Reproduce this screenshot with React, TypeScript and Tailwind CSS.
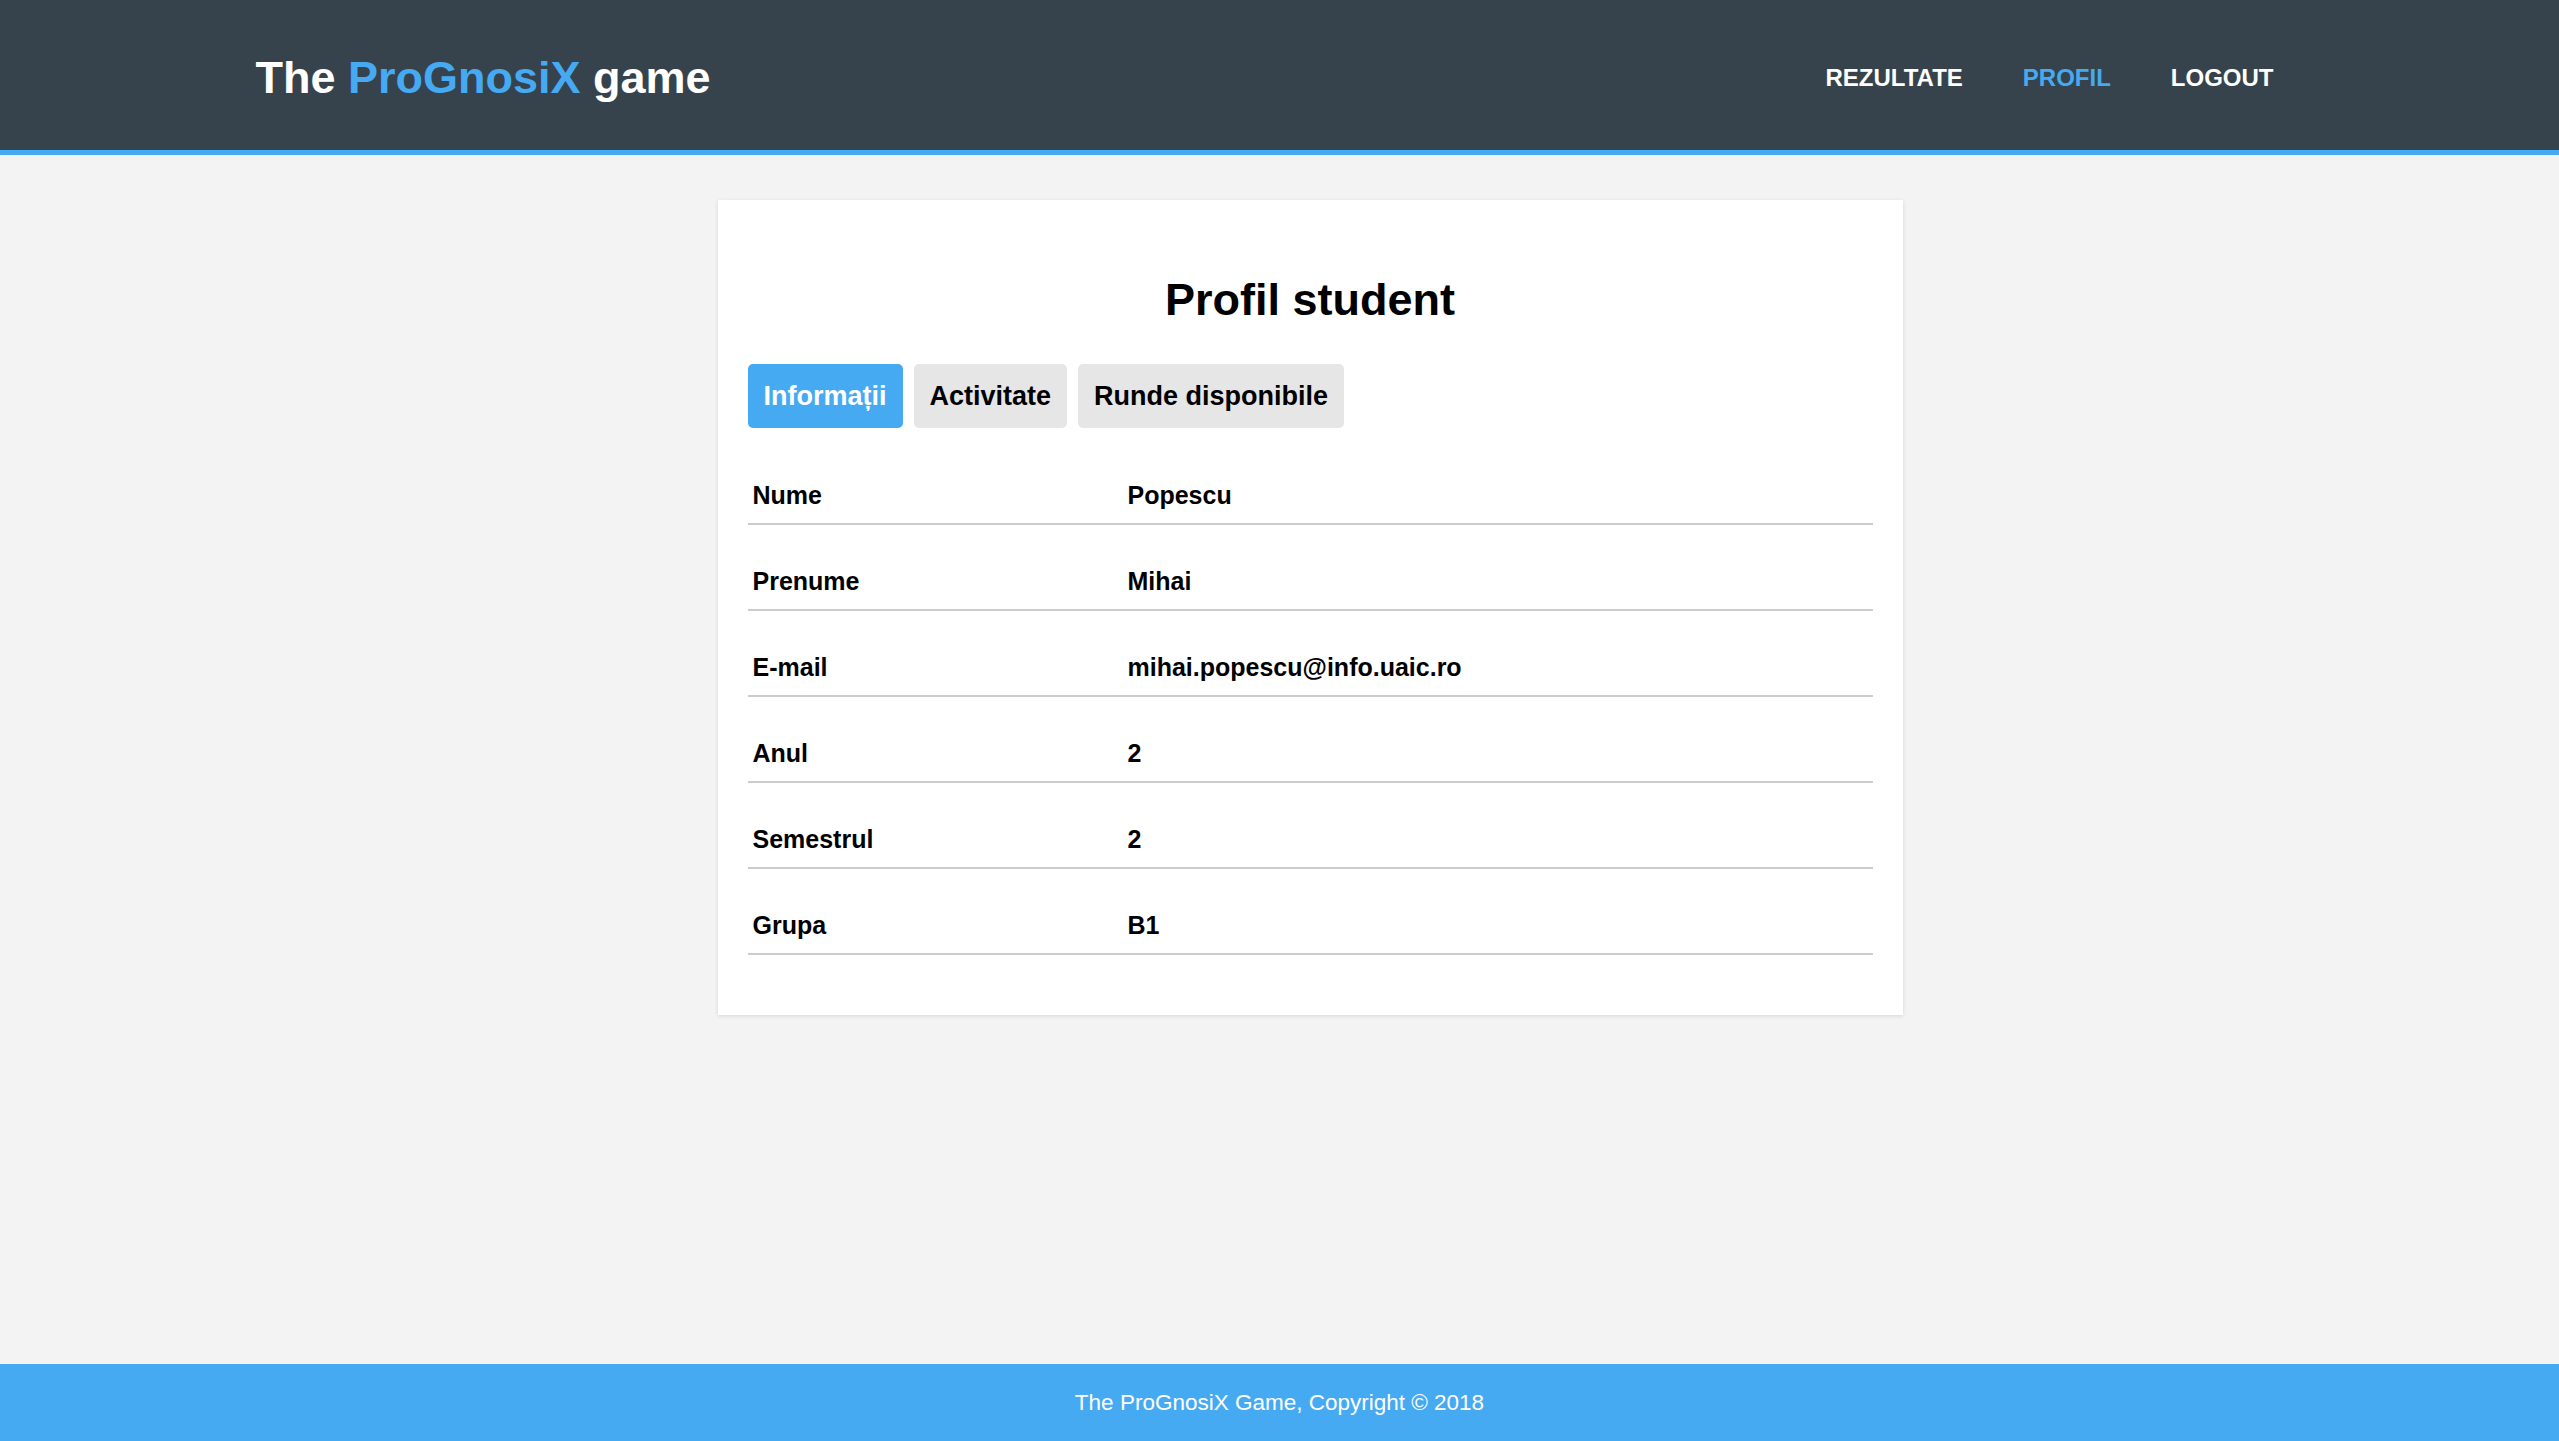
const navLinks = [
  { label: "REZULTATE", active: false },
  { label: "PROFIL", active: true },
  { label: "LOGOUT", active: false },
];

const tabs = [
  { label: "Informații", active: true },
  { label: "Activitate", active: false },
  { label: "Runde disponibile", active: false },
];

const rows = [
  ["Nume", "Popescu"],
  ["Prenume", "Mihai"],
  ["E-mail", "mihai.popescu@info.uaic.ro"],
  ["Anul", "2"],
  ["Semestrul", "2"],
  ["Grupa", "B1"],
];

function Header() {
  return (
    <header className="border-b-[5px] border-[#46aaf2] bg-[#36434c]">
      <div className="mx-auto flex h-[150px] w-[2048px] items-center justify-between pt-[5px]">
        <a href="#" className="text-[45px] font-bold leading-none text-white">
          The <span className="text-[#46aaf2]">ProGnosiX</span> game
        </a>
        <nav className="flex">
          {navLinks.map((link) => (
            <a
              key={link.label}
              href="#"
              className={
                link.active
                  ? "px-[30px] text-[24px] font-bold text-[#46aaf2]"
                  : "px-[30px] text-[24px] font-bold text-white"
              }
            >
              {link.label}
            </a>
          ))}
        </nav>
      </div>
    </header>
  );
}

function ProfileCard() {
  return (
    <section className="ml-[462px] w-[1185px] bg-white px-[30px] pb-[60px] pt-[74px] shadow-[0_1px_4px_rgba(0,0,0,0.12)]">
      <h1 className="text-center text-[45px] font-bold leading-[52px] text-black">
        Profil student
      </h1>

      <div className="mt-[38px] flex gap-[11px]">
        {tabs.map((tab) => (
          <button
            key={tab.label}
            type="button"
            className={
              tab.active
                ? "flex h-[64px] items-center rounded-[5px] bg-[#46aaf2] px-[16px] text-[27px] font-bold text-white"
                : "flex h-[64px] items-center rounded-[5px] bg-[#e6e6e6] px-[16px] text-[27px] font-bold text-black"
            }
          >
            {tab.label}
          </button>
        ))}
      </div>

      <div className="mt-[11px]">
        {rows.map(([label, value]) => (
          <div
            key={label}
            className="grid grid-cols-[375px_1fr] border-b-2 border-[#cccccc] pb-[14px] pt-[42px] text-[25px] font-bold leading-[28px] text-black"
          >
            <span className="px-[5px]">{label}</span>
            <span className="px-[5px]">{value}</span>
          </div>
        ))}
      </div>
    </section>
  );
}

export default function App() {
  return (
    <div
      className="flex min-h-screen flex-col bg-[#f3f3f3]"
      style={{ fontFamily: '"Liberation Sans", Arial, sans-serif' }}
    >
      <Header />
      <main className="flex-1 pt-[45px]">
        <div className="mx-auto w-[2048px]">
          <ProfileCard />
        </div>
      </main>
      <footer className="flex h-[77px] items-center justify-center bg-[#46aaf2] text-[22.5px] text-white">
        The ProGnosiX Game, Copyright © 2018
      </footer>
    </div>
  );
}
